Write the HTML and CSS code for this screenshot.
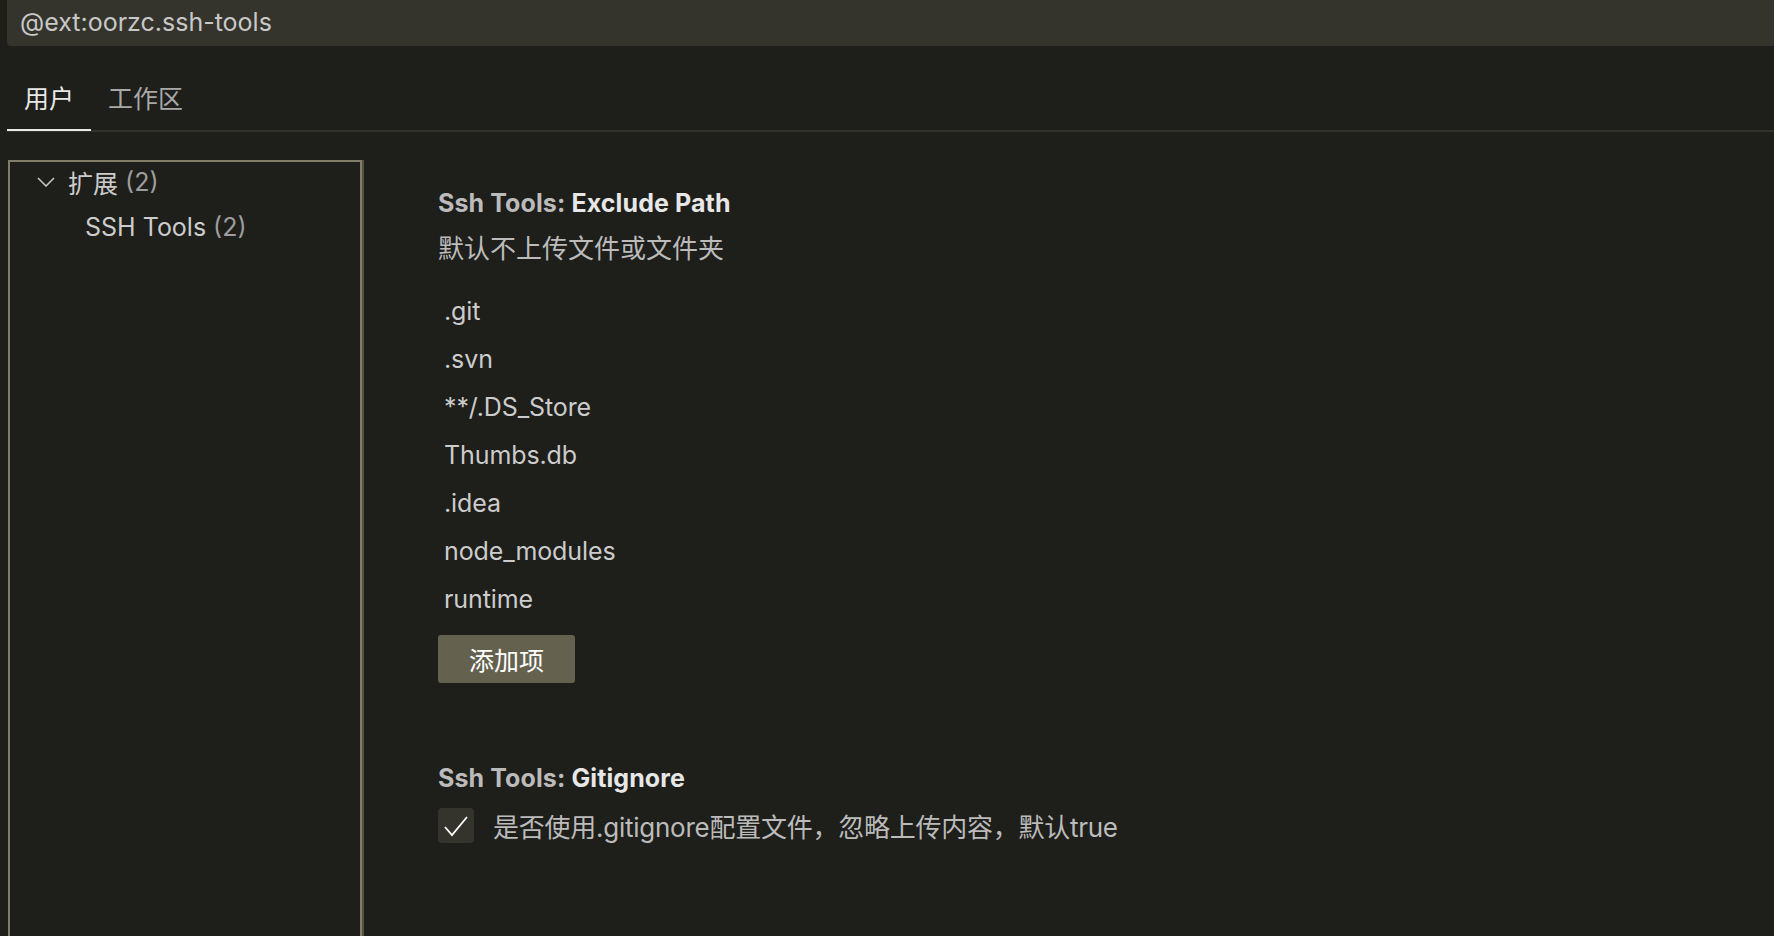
FILE: index.html
```html
<!DOCTYPE html>
<html lang="zh-CN">
<head>
<meta charset="utf-8">
<title>Settings</title>
<link rel="stylesheet" href="styles.css">
</head>
<body>
<div class="search">@ext:oorzc.ssh-tools</div>
<div class="tabs">
  <div class="tab active">用户</div>
  <div class="tab">工作区</div>
</div>
<div class="main">
  <div class="toc">
    <div class="toc-row level1">
      <svg class="chevron" width="18" height="10" viewBox="0 0 18 10"><polyline points="1,1 9,9 17,1" fill="none" stroke="#c5c5c5" stroke-width="1.6"/></svg>
      <span class="toc-label">扩展</span><span class="count">(2)</span>
    </div>
    <div class="toc-row level2">
      <span class="toc-label">SSH Tools</span><span class="count">(2)</span>
    </div>
  </div>
  <div class="settings">
    <div class="setting">
      <div class="title"><span class="cat">Ssh Tools: </span><span class="key">Exclude Path</span></div>
      <div class="desc">默认不上传文件或文件夹</div>
      <ul class="list">
        <li>.git</li>
        <li>.svn</li>
        <li>**/.DS_Store</li>
        <li>Thumbs.db</li>
        <li>.idea</li>
        <li>node_modules</li>
        <li>runtime</li>
      </ul>
      <button class="add-btn">添加项</button>
    </div>
    <div class="setting second">
      <div class="title"><span class="cat">Ssh Tools: </span><span class="key">Gitignore</span></div>
      <div class="check-row">
        <span class="checkbox"><svg width="36" height="35" viewBox="0 0 36 35"><polyline points="7,19 14,27 29,9" fill="none" stroke="#ffffff" stroke-width="1.8"/></svg></span>
        <span class="check-label">是否使用.gitignore配置文件，忽略上传内容，默认true</span>
      </div>
    </div>
  </div>
</div>
</body>
</html>
```
FILE: styles.css
```css
html, body {
  margin: 0;
  padding: 0;
  background: #1e1e1a;
  overflow: hidden;
  height: 936px;
}
body {
  font-family: Inter, "Noto Sans CJK SC", sans-serif;
  color: #cccccc;
}
.search {
  margin-left: 7px;
  height: 46px;
  line-height: 44px;
  padding-left: 13px;
  background: #34342c;
  border-bottom-left-radius: 4px;
  font-size: 25px;
  color: #c8c8c8;
}
.tabs {
  display: flex;
  margin-left: 7px;
  border-bottom: 2px solid #33332d;
}
.tab {
  padding: 38px 17px 15px;
  line-height: 30px;
  font-size: 25px;
  color: #a8a8a8;
  border-bottom: 2px solid transparent;
  margin-bottom: -1px;
}
.tab.active {
  color: #e8e8e8;
  border-bottom-color: #e8e8e8;
}
.main {
  display: flex;
  margin-top: 28px;
}
.toc {
  margin-left: 8px;
  width: 350px;
  height: 800px;
  flex: none;
  border: 2px solid #827d68;
  box-shadow: 2px 0 0 #55533f;
}
.toc-row {
  display: flex;
  align-items: center;
  font-size: 25px;
  white-space: nowrap;
}
.toc-row.level1 {
  height: 40px;
  padding-left: 27px;
}
.chevron {
  margin-right: 13px;
  flex: none;
}
.toc-row.level2 {
  height: 50px;
  padding-left: 75px;
}
.toc-label {
  color: #cccccc;
  margin-right: 7px;
}
.count {
  color: #9d9d9d;
}
.settings {
  margin-left: 76px;
  padding-top: 25px;
  flex: 1;
}
.title {
  line-height: 36px;
  font-size: 25px;
  font-weight: 700;
  letter-spacing: 0.1px;
  white-space: nowrap;
}
.cat {
  color: #bbbbbb;
}
.key {
  color: #e7e7e7;
}
.desc {
  margin-top: 10px;
  line-height: 36px;
  font-size: 26px;
  color: #bbbbbb;
}
.list {
  list-style: none;
  margin: 20px 0 0;
  padding: 0 0 0 6px;
}
.list li {
  height: 48px;
  line-height: 48px;
  font-size: 25px;
  color: #cccccc;
  letter-spacing: -0.1px;
}
.add-btn {
  display: block;
  margin-top: 12px;
  width: 137px;
  height: 48px;
  padding: 0;
  border: none;
  border-radius: 3px;
  background: #64624f;
  color: #ffffff;
  font-family: "Noto Sans CJK SC", sans-serif;
  font-size: 25px;
}
.setting.second {
  margin-top: 77px;
}
.check-row {
  display: flex;
  align-items: center;
  margin-top: 11px;
  height: 36px;
}
.checkbox {
  width: 36px;
  height: 35px;
  border-radius: 4px;
  background: #34342c;
  display: flex;
  flex: none;
}
.check-label {
  margin-left: 19px;
  font-size: 26px;
  color: #bbbbbb;
  letter-spacing: -0.25px;
  white-space: nowrap;
}
```
